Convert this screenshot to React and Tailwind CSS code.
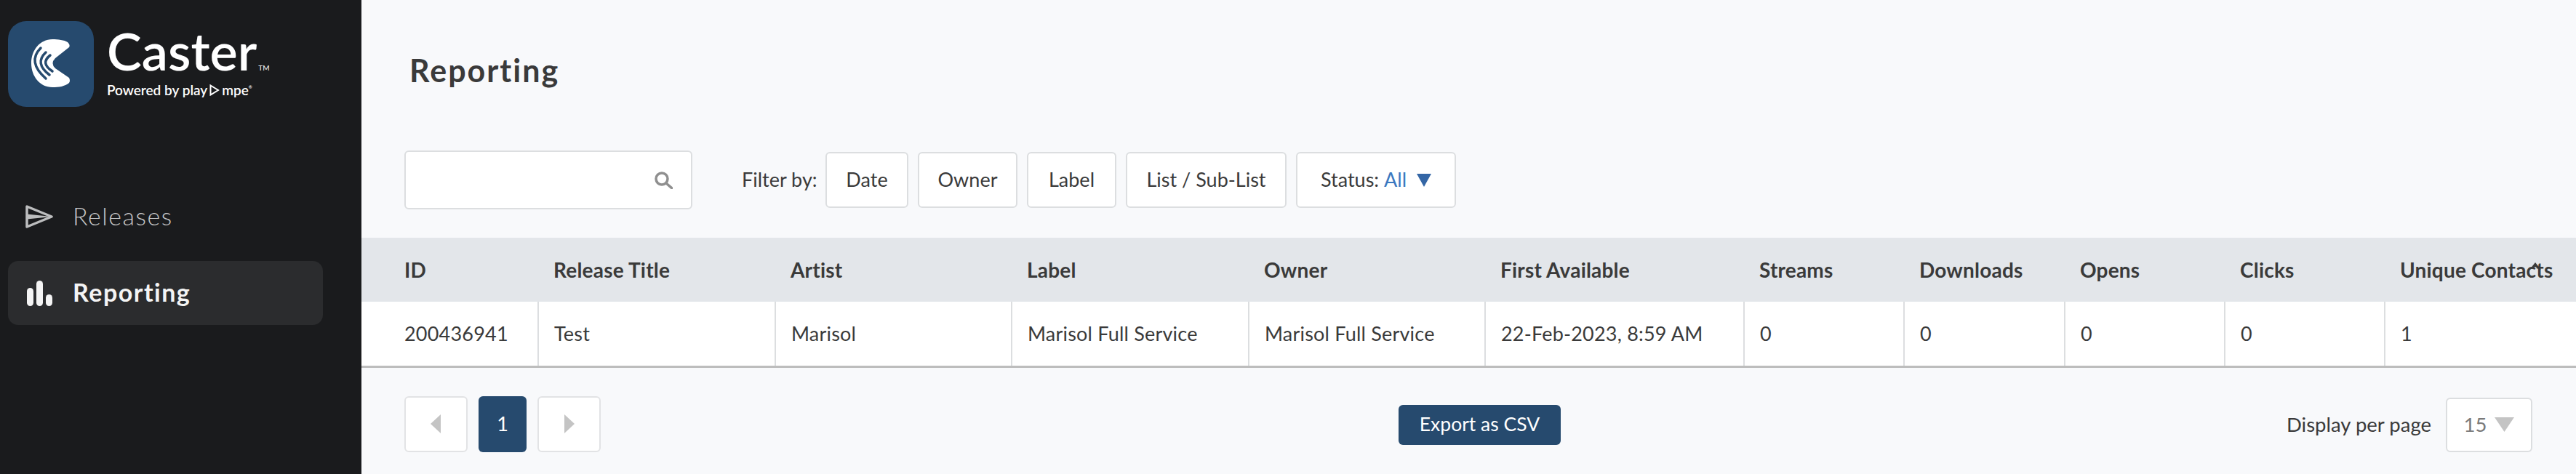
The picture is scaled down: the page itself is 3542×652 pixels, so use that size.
import React from "react";

const cols = [
  ["ID", "200436941", "w-[243px] pl-[59px]"],
  ["Release Title", "Test", "w-[326px] pl-[21px]"],
  ["Artist", "Marisol", "w-[325px] pl-[21px]"],
  ["Label", "Marisol Full Service", "w-[326px] pl-[21px]"],
  ["Owner", "Marisol Full Service", "w-[325px] pl-[21px]"],
  ["First Available", "22-Feb-2023, 8:59 AM", "w-[356px] pl-[21px]"],
  ["Streams", "0", "w-[220px] pl-[21px]"],
  ["Downloads", "0", "w-[221px] pl-[21px]"],
  ["Opens", "0", "w-[220px] pl-[21px]"],
  ["Clicks", "0", "w-[220px] pl-[21px]"],
  ["Unique Contacts", "1", "w-[263px] pl-[21px]"],
];

function Logo() {
  return (
    <svg viewBox="0 0 118 118" className="h-[118px] w-[118px] shrink-0">
      <rect width="118" height="118" rx="25" fill="#264a6e" />
      <path d="M82 29 Q86 33 84 36 L65 51 Q58 58 65 65 L84 78 Q86 82 84 85 C78 90 70 91 61 91 C44 91 32 76 32 58 C32 40 44 25 61 25 C69 25 77 26 82 29 Z" fill="#fff" />
      <g fill="none" stroke="#264a6e" strokeWidth="3.5" strokeLinecap="round">
        <path d="M45 37 Q26 56 52 79" />
        <path d="M52 43 Q36 58 57 74" />
        <path d="M58 47 Q44 58 61 69" />
      </g>
    </svg>
  );
}

function Btn({ w, children }) {
  return (
    <div className={`${w} flex h-[77px] items-center justify-center whitespace-nowrap rounded-[6px] border-2 border-[#dcdee0] bg-white text-[27px] text-[#3a3a3a]`}>
      {children}
    </div>
  );
}

export default function App() {
  return (
    <div className="flex h-[652px] w-[3542px] overflow-hidden bg-[#f8f9fb] font-['Lato','Noto_Sans',sans-serif] text-[#3a3a3a]">
      <aside className="w-[497px] shrink-0 bg-[#1a1b1d] pl-[11px] pt-[29px]">
        <div className="flex items-start">
          <Logo />
          <div className="ml-[18px] flex flex-col pt-[1px] text-white">
            <div className="flex items-end">
              <span className="text-[72px] font-semibold leading-[79px]">Caster</span>
              <span className="mb-[11px] ml-[2px] text-[10px] leading-none">TM</span>
            </div>
            <div className="flex items-center text-[19px] font-semibold leading-[22px]">
              <span>Powered by play</span>
              <svg viewBox="0 0 14 16" className="mx-[3px] h-[16px] w-[14px]"><path d="M1.5 1.5 L12 8 L1.5 14.5 Z" fill="none" stroke="#fff" strokeWidth="2" /></svg>
              <span>mpe</span>
              <span className="mb-[8px] text-[6px]">®</span>
            </div>
          </div>
        </div>
        <nav className="mt-[107px] flex w-[433px] flex-col gap-[17px]">
          <div className="flex h-[88px] items-center pl-[24px] text-[#c4c5c6]">
            <svg viewBox="0 0 38 32" className="h-[32px] w-[38px]">
              <path d="M2 2 L36 16 L2 30 Z" fill="none" stroke="#bcbdbe" strokeWidth="3.5" strokeLinejoin="round" />
              <path d="M2 12.5 L36 16 L2 19.5 Z" fill="#bcbdbe" />
            </svg>
            <span className="ml-[27px] pb-[3px] text-[34px] font-light tracking-[1.5px]">Releases</span>
          </div>
          <div className="flex h-[88px] items-center rounded-[14px] bg-[#2b2c2e] pl-[26px] text-[#f4f4f4]">
            <svg viewBox="0 0 35 35" className="h-[35px] w-[35px]" fill="#f4f4f4">
              <rect x="0" y="10" width="9" height="25" rx="4.5" />
              <rect x="13" y="0" width="9" height="35" rx="4.5" />
              <rect x="26" y="19" width="9" height="16" rx="4.5" />
            </svg>
            <span className="ml-[28px] pb-[3px] text-[34px] font-bold tracking-[1.5px]">Reporting</span>
          </div>
        </nav>
      </aside>
      <main className="flex min-w-0 flex-1 flex-col">
        <h1 className="pl-[66px] pt-[69px] text-[43px] font-bold leading-[56px] tracking-[2px]">Reporting</h1>
        <div className="mt-[82px] flex items-center pl-[59px]">
          <div className="flex h-[81px] w-[396px] items-center justify-end rounded-[6px] border-2 border-[#dcdee0] bg-white pr-[25px]">
            <svg viewBox="0 0 25 24" className="h-[24px] w-[25px]" fill="none" stroke="#8f8f8f" strokeWidth="3.5"><circle cx="10" cy="10" r="8" /><path d="M16 16 L24 23" strokeLinecap="round" /></svg>
          </div>
          <span className="ml-[68px] mr-[13px] w-[102px] whitespace-nowrap text-[27px]">Filter by:</span>
          <div className="flex gap-[13px]">
            <Btn w="w-[114px]">Date</Btn>
            <Btn w="w-[137px]">Owner</Btn>
            <Btn w="w-[123px]">Label</Btn>
            <Btn w="w-[221px]">List / Sub-List</Btn>
            <Btn w="w-[220px]">
              <span>Status:</span>
              <span className="ml-[7px] text-[#3b78c0]">All</span>
              <svg viewBox="0 0 20 18" className="ml-[14px] h-[18px] w-[20px]"><path d="M0 0 H20 L10 18 Z" fill="#3466a5" /></svg>
            </Btn>
          </div>
        </div>
        <table className="mt-[39px] w-[3045px] table-fixed border-collapse text-left text-[27px] tracking-[0.2px]">
          <thead>
            <tr className="h-[88px] bg-[#e3e6ea]">
              {cols.map(([h, , c]) => (
                <th key={h} className={`${c} relative whitespace-nowrap text-[28px] font-bold`}>
                  {h}
                  {h === "Unique Contacts" && (
                    <svg viewBox="0 0 16 10" className="absolute left-[199px] top-[34px] h-[10px] w-[16px]"><path d="M0 10 L8 0 L16 10 L8 6 Z" fill="#3a3a3a" /></svg>
                  )}
                </th>
              ))}
            </tr>
          </thead>
          <tbody>
            <tr className="h-[89px] border-b-[3px] border-[#bdbdbd] bg-white">
              {cols.map(([h, v, c], i) => (
                <td key={h} className={`${c} whitespace-nowrap ${i ? "border-l-2 border-[#dcdee0]" : ""}`}>{v}</td>
              ))}
            </tr>
          </tbody>
        </table>
        <div className="mt-[39px] flex items-start pl-[59px] pr-[60px]">
          <div className="flex w-[270px] gap-[15px]">
            <div className="flex h-[77px] w-[87px] items-center justify-center rounded-[6px] border-2 border-[#e2e3e5] bg-white">
              <svg viewBox="0 0 14 26" className="h-[26px] w-[14px]"><path d="M14 0 V26 L0 13 Z" fill="#c4c4c4" /></svg>
            </div>
            <div className="flex h-[77px] w-[67px] items-center justify-center rounded-[6px] bg-[#264a6e] text-[27px] text-white">1</div>
            <div className="flex h-[77px] w-[87px] items-center justify-center rounded-[6px] border-2 border-[#e2e3e5] bg-white">
              <svg viewBox="0 0 14 26" className="h-[26px] w-[14px]"><path d="M0 0 V26 L14 13 Z" fill="#c4c4c4" /></svg>
            </div>
          </div>
          <div className="ml-[1097px] mt-[12px] flex h-[55px] w-[223px] items-center justify-center rounded-[6px] bg-[#264a6e] text-[26.5px] text-white">Export as CSV</div>
          <div className="ml-auto mt-[2px] flex items-center gap-[20px]">
            <span className="text-[27.5px]">Display per page</span>
            <div className="flex h-[75px] w-[119px] items-center justify-center gap-[11px] rounded-[6px] border-2 border-[#dcdee0] bg-white text-[27.5px] text-[#7a7a7a]">
              <span>15</span>
              <svg viewBox="0 0 27 20" className="h-[20px] w-[27px]"><path d="M0 0 H27 L13.5 20 Z" fill="#c4c4c4" /></svg>
            </div>
          </div>
        </div>
      </main>
    </div>
  );
}
